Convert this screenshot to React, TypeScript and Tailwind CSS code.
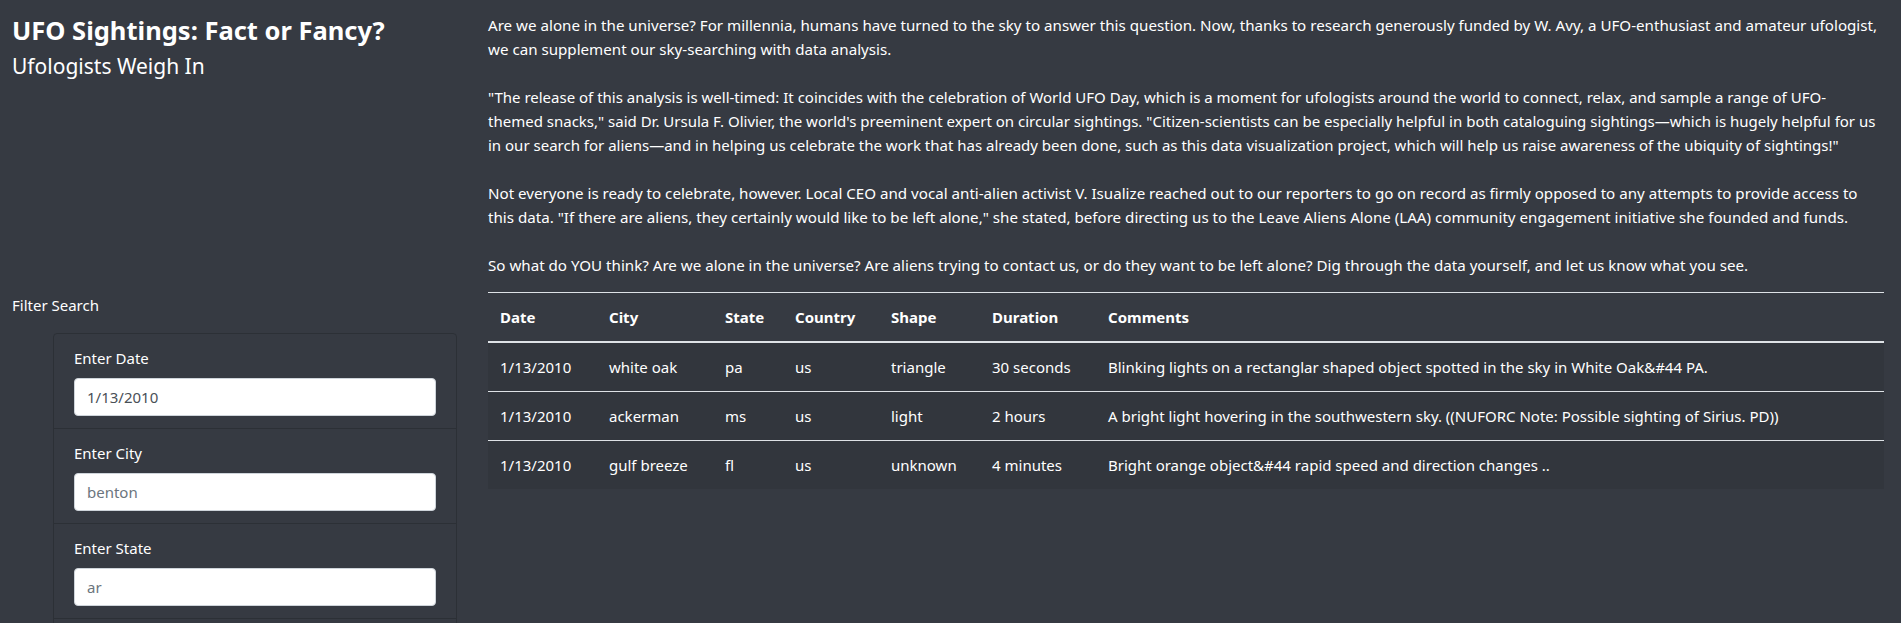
import React from 'react';

type Sighting = {
  datetime: string;
  city: string;
  state: string;
  country: string;
  shape: string;
  duration: string;
  comments: string;
};

const sightings: Sighting[] = [
  {
    datetime: '1/13/2010',
    city: 'white oak',
    state: 'pa',
    country: 'us',
    shape: 'triangle',
    duration: '30 seconds',
    comments:
      'Blinking lights on a rectanglar shaped object spotted in the sky in White Oak&#44 PA.',
  },
  {
    datetime: '1/13/2010',
    city: 'ackerman',
    state: 'ms',
    country: 'us',
    shape: 'light',
    duration: '2 hours',
    comments:
      'A bright light hovering in the southwestern sky. ((NUFORC Note: Possible sighting of Sirius. PD))',
  },
  {
    datetime: '1/13/2010',
    city: 'gulf breeze',
    state: 'fl',
    country: 'us',
    shape: 'unknown',
    duration: '4 minutes',
    comments: 'Bright orange object&#44 rapid speed and direction changes ..',
  },
];

const filters = [
  { id: 'datetime', label: 'Enter Date', value: '1/13/2010', placeholder: '' },
  { id: 'city', label: 'Enter City', value: '', placeholder: 'benton' },
  { id: 'state', label: 'Enter State', value: '', placeholder: 'ar' },
  { id: 'country', label: 'Enter Country', value: '', placeholder: 'us' },
  { id: 'shape', label: 'Enter Shape', value: '', placeholder: 'circle' },
];

const headers = [
  { label: 'Date', width: 'w-[109px]' },
  { label: 'City', width: 'w-[116px]' },
  { label: 'State', width: 'w-[70px]' },
  { label: 'Country', width: 'w-[96px]' },
  { label: 'Shape', width: 'w-[101px]' },
  { label: 'Duration', width: 'w-[116px]' },
  { label: 'Comments', width: '' },
];

function FilterPanel() {
  return (
    <div className="pt-[213px]">
      <h5 className="pl-3 text-[15px] leading-6">Filter Search</h5>
      <ul className="mt-[16px] ml-[53px] w-[404px] rounded-[4px] border border-[#2c3036]">
        {filters.map((f) => (
          <li key={f.id} className="px-5 py-3 border-b border-[#2c3036] last:border-b-0">
            <label htmlFor={f.id} className="block text-[15px] leading-6 mb-2">
              {f.label}
            </label>
            <input
              id={f.id}
              type="text"
              defaultValue={f.value}
              placeholder={f.placeholder}
              className="block w-full h-[38px] px-3 rounded-[4px] border border-[#ced4da] bg-white text-[15px] text-[#495057] placeholder:text-[#6c757d] outline-none"
            />
          </li>
        ))}
      </ul>
    </div>
  );
}

function SightingsTable() {
  return (
    <table className="w-full table-fixed border-collapse text-[15px] leading-6">
      <thead>
        <tr>
          {headers.map((h) => (
            <th
              key={h.label}
              className={`${h.width} px-3 py-3 text-left font-bold border-t border-[#dee2e6] border-b-2 border-b-[#dee2e6]`}
            >
              {h.label}
            </th>
          ))}
        </tr>
      </thead>
      <tbody>
        {sightings.map((s, i) => (
          <tr key={i} className="bg-[#32363d]">
            <td className="px-3 py-3 border-t border-[#dee2e6]">{s.datetime}</td>
            <td className="px-3 py-3 border-t border-[#dee2e6]">{s.city}</td>
            <td className="px-3 py-3 border-t border-[#dee2e6]">{s.state}</td>
            <td className="px-3 py-3 border-t border-[#dee2e6]">{s.country}</td>
            <td className="px-3 py-3 border-t border-[#dee2e6]">{s.shape}</td>
            <td className="px-3 py-3 border-t border-[#dee2e6]">{s.duration}</td>
            <td className="px-3 py-3 border-t border-[#dee2e6]">{s.comments}</td>
          </tr>
        ))}
      </tbody>
    </table>
  );
}

export default function App() {
  return (
    <div
      className="min-h-screen bg-[#363a42] text-white flex"
      style={{ fontFamily: '"Noto Sans", "Open Sans", sans-serif' }}
    >
      <div className="w-[476px] shrink-0">
        <div className="pl-3 pt-[14px]">
          <h1 className="text-[25.5px] font-bold leading-[32px]">UFO Sightings: Fact or Fancy?</h1>
          <h2 className="text-[21px] leading-[28px] mt-[6px]">Ufologists Weigh In</h2>
        </div>
        <FilterPanel />
      </div>
      <div className="flex-1 pl-3 pr-[17px] pt-[13px] text-[15.15px] leading-6">
        <p className="mb-6">
          Are we alone in the universe? For millennia, humans have turned to the sky to answer this
          question. Now, thanks to research generously funded by W. Avy, a UFO-enthusiast and amateur
          ufologist, we can supplement our sky-searching with data analysis.
        </p>
        {/* line break after "UFO-" mirrors the original wrap */}
        <p className="mb-6 text-[15px]">
          "The release of this analysis is well-timed: It coincides with the celebration of World UFO
          Day, which is a moment for ufologists around the world to connect, relax, and sample a range
          of UFO-
          <br />
          themed snacks," said Dr. Ursula F. Olivier, the world's preeminent expert on circular
          sightings. "Citizen-scientists can be especially helpful in both cataloguing sightings—which
          is hugely helpful for us in our search for aliens—and in helping us celebrate the work that
          has already been done, such as this data visualization project, which will help us raise
          awareness of the ubiquity of sightings!"
        </p>
        <p className="mb-6">
          Not everyone is ready to celebrate, however. Local CEO and vocal anti-alien activist V.
          Isualize reached out to our reporters to go on record as firmly opposed to any attempts to
          provide access to this data. "If there are aliens, they certainly would like to be left
          alone," she stated, before directing us to the Leave Aliens Alone (LAA) community engagement
          initiative she founded and funds.
        </p>
        <p className="mb-[15px]">
          So what do YOU think? Are we alone in the universe? Are aliens trying to contact us, or do
          they want to be left alone? Dig through the data yourself, and let us know what you see.
        </p>
        <SightingsTable />
      </div>
    </div>
  );
}
